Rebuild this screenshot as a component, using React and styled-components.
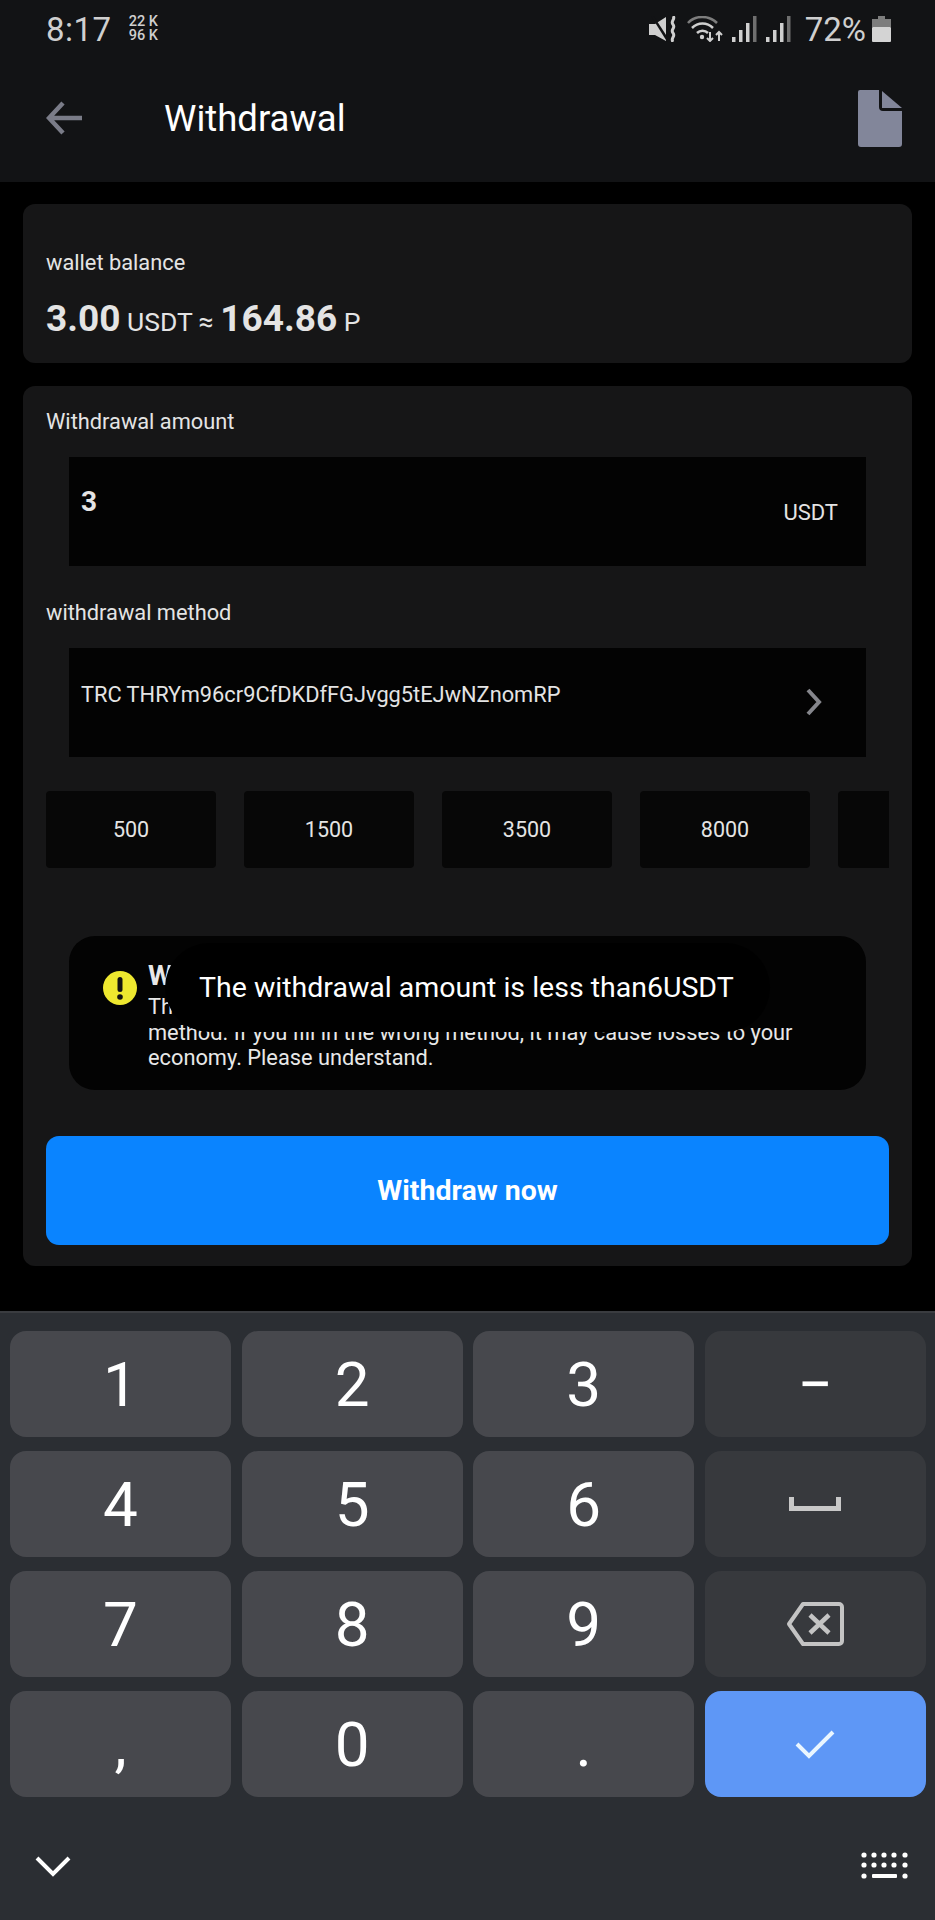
import React from 'react';
import styled, { createGlobalStyle } from 'styled-components';

const GlobalStyle = createGlobalStyle`
  html, body {
    margin: 0;
    padding: 0;
    background: #000;
    font-family: Roboto, "Liberation Sans", sans-serif;
  }
`;

const Page = styled.div`
  position: relative;
  width: 935px;
  height: 1920px;
  overflow: hidden;
  background: #000;
  color: #fff;
  display: flex;
  flex-direction: column;
`;

const TopArea = styled.header`
  height: 182px;
  background: #121315;
  flex: none;
  display: flex;
  flex-direction: column;
`;

const StatusBar = styled.div`
  height: 56px;
  padding: 2px 44px 0 46px;
  box-sizing: border-box;
  display: flex;
  align-items: center;
  justify-content: space-between;
  color: #cfcfcf;
`;

const StatusSide = styled.div`
  display: flex;
  align-items: center;
  gap: ${(p) => p.$gap || 0}px;
`;

const Clock = styled.span`
  font-size: 33px;
  font-weight: 400;
  letter-spacing: 0.5px;
`;

const NetSpeed = styled.div`
  margin-left: 17px;
  font-size: 14.5px;
  line-height: 14px;
  font-weight: 500;
  display: flex;
  flex-direction: column;
`;

const Battery = styled.span`
  font-size: 33px;
  margin: 0 -3px 0 5px;
`;

const NavBar = styled.div`
  flex: 1;
  padding: 0 33px 2px 46px;
  display: flex;
  align-items: center;
`;

const Title = styled.h1`
  margin: 0 0 0 82px;
  flex: 1;
  font-size: 36.5px;
  font-weight: 400;
  color: #fff;
`;

const Content = styled.main`
  flex: 1;
  padding: 22px 23px 0;
  display: flex;
  flex-direction: column;
  gap: 23px;
`;

const Card = styled.section`
  background: #161617;
  border-radius: 12px;
  padding: ${(p) => p.$pad};
`;

const Label = styled.div`
  margin-top: ${(p) => p.$top || 0}px;
  font-size: 21.8px;
  line-height: 26px;
  color: #e4e4e4;
`;

const Balance = styled.div`
  margin-top: 21px;
  height: 44px;
  font-size: 26.5px;
  line-height: 44px;
  color: #e4e4e4;
`;

const Big = styled.b`
  font-size: 37px;
  font-weight: 700;
`;

const Field = styled.div`
  margin: 22px 23px 0;
  height: 109px;
  box-sizing: border-box;
  background: #030303;
  display: flex;
  justify-content: space-between;
  padding: ${(p) => p.$pad};
`;

const AmountValue = styled.span`
  font-size: 28px;
  font-weight: 700;
  line-height: 30px;
  color: #e4e4e4;
`;

const Unit = styled.span`
  font-size: 22px;
  line-height: 24px;
  margin-top: 14px;
  color: #e4e4e4;
`;

const Address = styled.span`
  font-size: 21.8px;
  line-height: 24px;
  color: #e4e4e4;
`;

const ChevronSlot = styled.span`
  margin-top: 5px;
  display: block;
`;

const Chips = styled.div`
  margin-top: 34px;
  width: 843px;
  display: flex;
  gap: 28px;
  overflow: hidden;
`;

const Chip = styled.div`
  flex: none;
  width: 170px;
  height: 77px;
  background: #070707;
  border-radius: 4px;
  display: flex;
  align-items: center;
  justify-content: center;
  font-size: 21.5px;
  color: #e4e4e4;
`;

const Notice = styled.div`
  margin: 68px 23px 0;
  height: 154px;
  box-sizing: border-box;
  background: #030303;
  border-radius: 26px;
  padding: 25px 20px 0 34px;
  display: flex;
  gap: 11px;
`;

const WarnSlot = styled.div`
  flex: none;
  margin-top: 10px;
`;

const NoticeText = styled.div`
  flex: 1;
  font-size: 21.8px;
  line-height: 25.5px;
  color: #e8e8e8;
  white-space: nowrap;
`;

const NoticeTitle = styled.div`
  font-size: 28px;
  line-height: 30px;
  font-weight: 700;
  margin-bottom: 3px;
`;

const WithdrawButton = styled.button`
  display: block;
  width: 100%;
  height: 109px;
  margin-top: 46px;
  border: 0;
  border-radius: 13px;
  background: #0a84ff;
  color: #fff;
  font-family: inherit;
  font-size: 28.5px;
  font-weight: 700;
`;

const Toast = styled.div`
  position: absolute;
  left: 165px;
  top: 943px;
  width: 605px;
  height: 89px;
  box-sizing: border-box;
  padding-left: 34px;
  border-radius: 45px;
  background: #000;
  display: flex;
  align-items: center;
  font-size: 28.5px;
  color: #fff;
`;

const Keyboard = styled.div`
  flex: none;
  height: 609px;
  box-sizing: border-box;
  background: #2b2e33;
  border-top: 2px solid #3a3c40;
  padding: 18px 10px 0;
`;

const KeyGrid = styled.div`
  display: grid;
  grid-template-columns: repeat(4, 221px);
  grid-auto-rows: 106px;
  column-gap: 10.6px;
  row-gap: 14px;
`;

const Key = styled.div`
  background: ${(p) => (p.$tone === 'side' ? '#37393d' : p.$tone === 'go' ? '#5e97f6' : '#47484d')};
  border-radius: 16px;
  display: flex;
  align-items: center;
  justify-content: center;
  font-size: 62px;
  color: #fff;
`;

const KeyFoot = styled.div`
  display: flex;
  justify-content: space-between;
  align-items: center;
  padding: 55px 15px 0 25px;
`;

const Arrow = () => (
  <svg width="36" height="34" viewBox="0 0 36 34" fill="none" stroke="#7a7c88" strokeWidth="4.5">
    <path d="M17 2 3 17l14 15M3 17h33" />
  </svg>
);

const FileIcon = () => (
  <svg width="44" height="57" viewBox="0 0 44 57">
    <path d="M2 0h19v17a4 4 0 0 0 4 4h19v33a3 3 0 0 1-3 3H3a3 3 0 0 1-3-3V2a2 2 0 0 1 2-2z" fill="#82869a" />
    <path d="M24 1l20 17H24z" fill="#82869a" />
  </svg>
);

const Chevron = () => (
  <svg width="18" height="28" viewBox="0 0 18 28" fill="none" stroke="#85868c" strokeWidth="4">
    <path d="M3 2l11 12L3 26" />
  </svg>
);

const Warn = () => (
  <svg width="34" height="34" viewBox="0 0 34 34">
    <circle cx="17" cy="17" r="17" fill="#eee82f" />
    <rect x="14.5" y="6" width="5" height="15" rx="2.5" fill="#111" />
    <circle cx="17" cy="26" r="2.8" fill="#111" />
  </svg>
);

const SpaceIcon = () => (
  <svg width="52" height="14" viewBox="0 0 52 14">
    <path d="M0 0h5v9h42V0h5v14H0z" fill="#c8c8c8" />
  </svg>
);

const BackspaceIcon = () => (
  <svg width="58" height="46" viewBox="0 0 58 46" fill="none" stroke="#c4c4c4" strokeWidth="4" strokeLinejoin="round">
    <path d="M17 3h36a3 3 0 0 1 3 3v34a3 3 0 0 1-3 3H17L3 23z" />
    <path d="M24 14l19 18M43 14 24 32" strokeWidth="4.5" />
  </svg>
);

const CheckIcon = () => (
  <svg width="40" height="31" viewBox="0 0 40 31" fill="none" stroke="#eaf6ff" strokeWidth="4">
    <path d="M2 15l12 12L38 3" />
  </svg>
);

const DownIcon = () => (
  <svg width="36" height="22" viewBox="0 0 36 22" fill="none" stroke="#fff" strokeWidth="4">
    <path d="M2 3l16 16L34 3" />
  </svg>
);

const KeyboardIcon = () => (
  <svg width="50" height="28" viewBox="0 0 50 28" fill="#fff">
    {[0, 1].flatMap((row) =>
      [4, 14, 24, 34, 45].map((x) => <circle key={`${row}-${x}`} cx={x} cy={3 + row * 10} r="2.6" />)
    )}
    <circle cx="4" cy="24" r="2.6" />
    <rect x="12" y="22" width="25" height="4" rx="1" />
    <circle cx="45" cy="24" r="2.6" />
  </svg>
);

const MuteIcon = () => (
  <svg width="29" height="26" viewBox="0 0 29 26" fill="#cfcfcf">
    <path d="M0 8h6l11-7v24L6 19H0z" />
    <path d="M2 0l2-1 15 23-2 2z" fill="#121315" />
    <path d="M24 0c3 3-3 5 0 8.500s-3 5 0 8.500-3 5 0 9" fill="none" stroke="#cfcfcf" strokeWidth="3" />
  </svg>
);

const WifiIcon = () => (
  <svg width="36" height="26" viewBox="0 0 36 26" fill="none" stroke="#cfcfcf">
    <path d="M1 7c7-8 21-8 29 0" stroke="#7d7d7d" strokeWidth="2.5" />
    <path d="M5 12c6-6 15-6 21 0" strokeWidth="2.5" />
    <path d="M10 17c3-3 8-3 11 0" strokeWidth="2.5" />
    <circle cx="15" cy="21" r="2.200" fill="#cfcfcf" stroke="none" />
    <path d="M23 16v9m-3-3 3 3 3-3M32 25v-9m-3 3 3-3 3 3" strokeWidth="2" />
  </svg>
);

const SignalIcon = () => (
  <svg width="25" height="26" viewBox="0 0 25 26" fill="#cfcfcf">
    <rect x="0" y="21" width="3.500" height="5" />
    <rect x="7" y="14" width="3.500" height="12" />
    <rect x="14" y="7" width="3.500" height="19" />
    <rect x="21" y="0" width="3.500" height="26" fill="#6f6f6f" />
  </svg>
);

const BatteryIcon = () => (
  <svg width="19" height="26" viewBox="0 0 19 26">
    <rect x="6" y="0" width="7" height="4" fill="#7d7d7d" />
    <rect x="0" y="3" width="19" height="8" fill="#7d7d7d" />
    <rect x="0" y="11" width="19" height="15" rx="1" fill="#d4d4d4" />
  </svg>
);

const KEYS = [
  { label: '1' },
  { label: '2' },
  { label: '3' },
  { label: '−', tone: 'side' },
  { label: '4' },
  { label: '5' },
  { label: '6' },
  { icon: <SpaceIcon />, tone: 'side' },
  { label: '7' },
  { label: '8' },
  { label: '9' },
  { icon: <BackspaceIcon />, tone: 'side' },
  { label: ',' },
  { label: '0' },
  { label: '.' },
  { icon: <CheckIcon />, tone: 'go' },
];

const App = () => (
  <Page>
    <GlobalStyle />
    <TopArea>
      <StatusBar>
        <StatusSide>
          <Clock>8:17</Clock>
          <NetSpeed>
            <span>22 K</span>
            <span>96 K</span>
          </NetSpeed>
        </StatusSide>
        <StatusSide $gap={9}>
          <MuteIcon />
          <WifiIcon />
          <SignalIcon />
          <SignalIcon />
          <Battery>72%</Battery>
          <BatteryIcon />
        </StatusSide>
      </StatusBar>
      <NavBar>
        <Arrow />
        <Title>Withdrawal</Title>
        <FileIcon />
      </NavBar>
    </TopArea>
    <Content>
      <Card $pad="46px 23px 22px">
        <Label>wallet balance</Label>
        <Balance>
          <Big>3.00</Big> USDT ≈ <Big>164.86</Big> P
        </Balance>
      </Card>
      <Card $pad="23px 23px 21px">
        <Label>Withdrawal amount</Label>
        <Field $pad="30px 28px 0 12px">
          <AmountValue>3</AmountValue>
          <Unit>USDT</Unit>
        </Field>
        <Label $top={34}>withdrawal method</Label>
        <Field $pad="35px 43px 0 12px">
          <Address>TRC THRYm96cr9CfDKDfFGJvgg5tEJwNZnomRP</Address>
          <ChevronSlot>
            <Chevron />
          </ChevronSlot>
        </Field>
        <Chips>
          <Chip>500</Chip>
          <Chip>1500</Chip>
          <Chip>3500</Chip>
          <Chip>8000</Chip>
          <Chip />
        </Chips>
        <Notice>
          <WarnSlot>
            <Warn />
          </WarnSlot>
          <NoticeText>
            <NoticeTitle>Warm reminder</NoticeTitle>
            The withdrawal address must be the same as chosen currency,
            <br />
            method. If you fill in the wrong method, it may cause losses to your
            <br />
            economy. Please understand.
          </NoticeText>
        </Notice>
        <WithdrawButton>Withdraw now</WithdrawButton>
      </Card>
    </Content>
    <Toast>The withdrawal amount is less than6USDT</Toast>
    <Keyboard>
      <KeyGrid>
        {KEYS.map((k, i) => (
          <Key key={i} $tone={k.tone}>
            {k.icon || k.label}
          </Key>
        ))}
      </KeyGrid>
      <KeyFoot>
        <DownIcon />
        <KeyboardIcon />
      </KeyFoot>
    </Keyboard>
  </Page>
);

export default App;
